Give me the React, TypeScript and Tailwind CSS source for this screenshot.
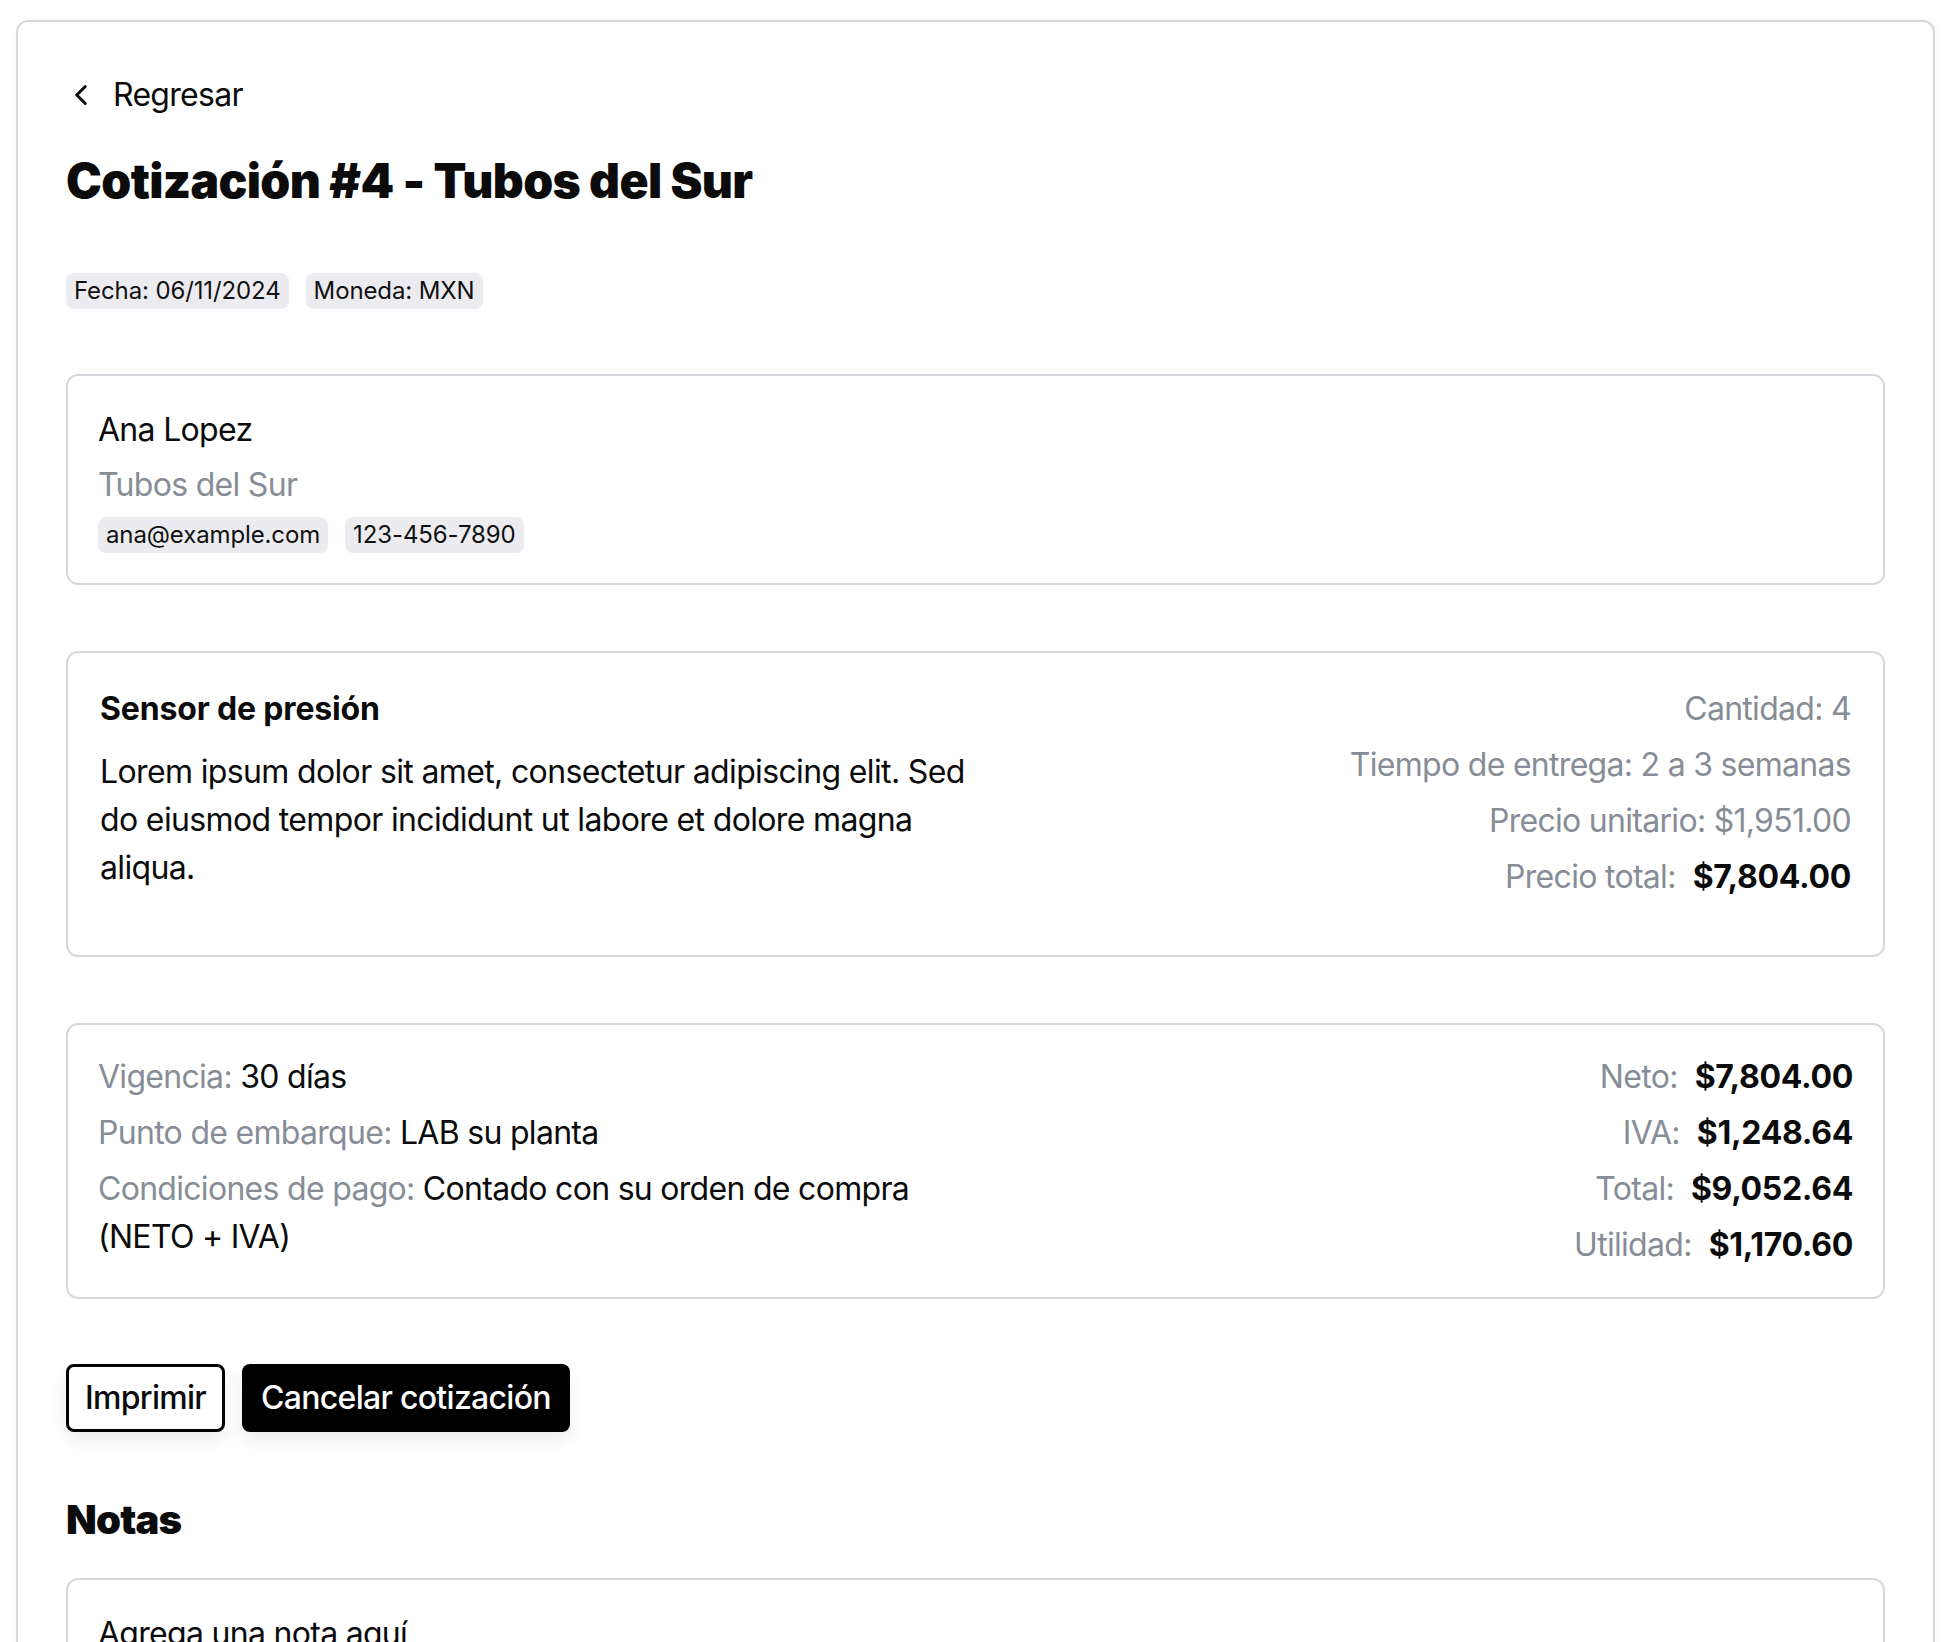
import { ChevronLeft } from "lucide-react";

const font = "font-['Inter','Liberation_Sans',sans-serif]";

function Badge({ children }: { children: React.ReactNode }) {
  return (
    <span className="inline-flex h-[36px] items-center rounded-[8px] bg-[#ececf0] px-[8px] text-[24px] leading-[36px] tracking-[-0.005em] text-[#111]">
      {children}
    </span>
  );
}

function Row({ label, value }: { label: string; value: string }) {
  return (
    <div className="flex items-center justify-end gap-[17px] leading-[48px]">
      <span className="text-[#878d96]">{label}</span>
      <span className="font-bold tracking-[-0.01em] text-[#0b0b0c]">{value}</span>
    </div>
  );
}

export default function App() {
  const totals = [
    { label: "Neto:", value: "$7,804.00" },
    { label: "IVA:", value: "$1,248.64" },
    { label: "Total:", value: "$9,052.64" },
    { label: "Utilidad:", value: "$1,170.60" },
  ];

  return (
    <div className={`min-h-screen bg-white pl-[16px] pr-[25px] pt-[20px] text-[32px] tracking-[-0.022em] text-[#0b0b0c] ${font}`}>
      <div className="rounded-[12px] border-2 border-[#d5d9de] px-[48px] pt-[49px] pb-[200px] shadow-[2px_0_10px_rgba(0,0,0,0.03)]">
        {/* Back link */}
        <button className="flex h-[48px] items-center gap-[15px] leading-[48px]">
          <ChevronLeft size={34} strokeWidth={2.1} className="-ml-[2px]" />
          <span>Regresar</span>
        </button>

        <h1 className="mt-[30px] text-[48px] font-black leading-[64px] tracking-[-0.013em]">
          Cotización #4 - Tubos del Sur
        </h1>

        <div className="mt-[60px] flex gap-[17px]">
          <Badge>Fecha: 06/11/2024</Badge>
          <Badge>Moneda: MXN</Badge>
        </div>

        {/* Customer */}
        <div className="mt-[65px] rounded-[12px] border-2 border-[#d5d9de] p-[30px]">
          <div className="leading-[48px]">Ana Lopez</div>
          <div className="mt-[7px] leading-[48px] text-[#878d96]">Tubos del Sur</div>
          <div className="mt-[8px] flex gap-[17px]">
            <Badge>ana@example.com</Badge>
            <Badge>123-456-7890</Badge>
          </div>
        </div>

        {/* Product */}
        <div className="mt-[66px] grid grid-cols-2 rounded-[12px] border-2 border-[#d5d9de] px-[32px] pt-[32px] pb-[54px]">
          <div>
            <div className="font-bold leading-[48px] tracking-[-0.005em]">Sensor de presión</div>
            <p className="mt-[15px] leading-[48px] tracking-[-0.02em]">
              Lorem ipsum dolor sit amet, consectetur adipiscing elit. Sed do eiusmod tempor incididunt ut labore et dolore magna aliqua.
            </p>
          </div>
          <div className="flex flex-col items-end gap-[8px] text-[#878d96]">
            <div className="leading-[48px]">Cantidad: 4</div>
            <div className="leading-[48px]">Tiempo de entrega: 2 a 3 semanas</div>
            <div className="leading-[48px]">Precio unitario: $1,951.00</div>
            <Row label="Precio total:" value="$7,804.00" />
          </div>
        </div>

        {/* Summary */}
        <div className="mt-[66px] grid grid-cols-2 rounded-[12px] border-2 border-[#d5d9de] px-[30px] py-[28px]">
          <div className="flex flex-col gap-[8px]">
            <p className="leading-[48px]">
              <span className="text-[#878d96]">Vigencia:</span> 30 días
            </p>
            <p className="leading-[48px]">
              <span className="text-[#878d96]">Punto de embarque:</span> LAB su planta
            </p>
            <p className="max-w-[840px] leading-[48px]">
              <span className="text-[#878d96]">Condiciones de pago:</span> Contado con su orden de compra (NETO + IVA)
            </p>
          </div>
          <div className="flex flex-col gap-[8px]">
            {totals.map((t) => (
              <Row key={t.label} label={t.label} value={t.value} />
            ))}
          </div>
        </div>

        {/* Actions */}
        <div className="mt-[65px] flex gap-[17px]">
          <button className="h-[68px] rounded-[8px] border-[3px] border-black bg-white px-[16px] font-medium leading-[48px] shadow-[0_8px_18px_rgba(0,0,0,0.08)]">
            Imprimir
          </button>
          <button className="h-[68px] rounded-[8px] bg-black px-[19px] font-medium leading-[48px] text-white shadow-[0_8px_18px_rgba(0,0,0,0.08)]">
            Cancelar cotización
          </button>
        </div>

        <h2 className="mt-[60px] text-[40px] font-black leading-[56px] tracking-[-0.02em]">Notas</h2>

        <div className="mt-[30px] min-h-[240px] rounded-[12px] border-2 border-[#d5d9de] p-[30px]">
          <div className="leading-[48px]">Agrega una nota aquí</div>
        </div>
      </div>
    </div>
  );
}
